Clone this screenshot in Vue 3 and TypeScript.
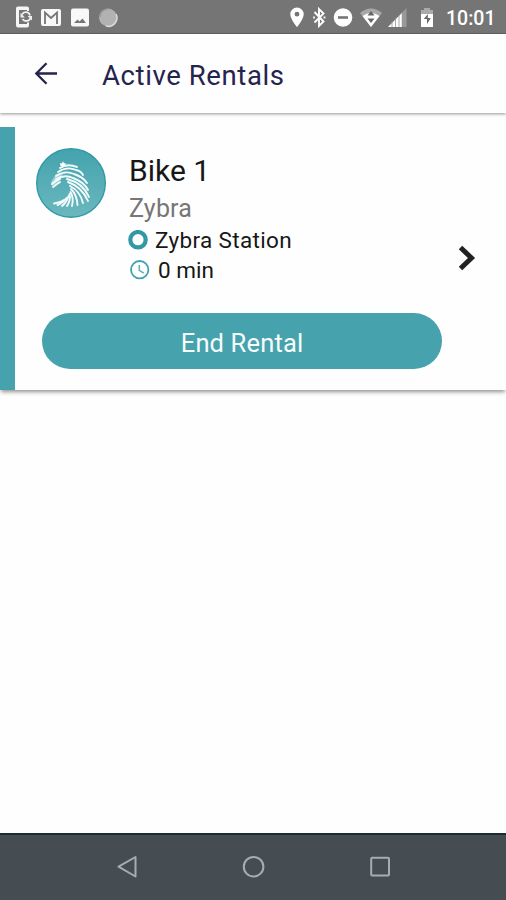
<script setup lang="ts">
import { ref } from 'vue'

interface Rental {
  name: string
  vendor: string
  station: string
  minutes: number
}

const time = '10:01'
const rentals = ref<Rental[]>([
  { name: 'Bike 1', vendor: 'Zybra', station: 'Zybra Station', minutes: 0 },
])

const stripes = [
  'M24 20Q31 15 41 19',
  'M22 24Q31 18 40 22Q45 23 47 27',
  'M20 28Q29 22 38 26Q47 29 51 35',
  'M20 31Q29 26 37 30Q48 34 52 42',
  'M31 31Q47 35 53 49',
  'M32 34Q46 39 52 53',
  'M34 38Q44 43 47 55',
  'M35 41Q41 47 41.500 57',
  'M34.500 44Q38 50 36 58',
  'M33.500 46Q35 52 31 58',
  'M32.500 48Q31 54 26 58',
  'M30.500 50Q27 55 21.500 57',
  'M28 52Q24 55 18 55.500',
  'M16 36Q20 32 24 31',
  'M17 39Q21 36 24 34',
]
</script>

<template>
  <div class="screen">
    <header class="status">
      <div class="group">
        <svg class="phone" width="18" height="34" viewBox="0 0 18 34">
          <path d="M3 6.500h9q2 0 2 2v2.500h-2V10H4v14h8v-1.500h2V25q0 2.500-2 2.500H3q-2 0-2-2.500V8.500q0-2 2-2z" fill="#f5f5f5" />
          <path d="M7 14.500a4.300 4.300 0 0 1 8 1M15.500 18a4.500 4.500 0 0 1-8 1" fill="none" stroke="#eee" stroke-width="1.800" />
          <path d="M5.500 13v4.500H10zM17 20.500v-4.500h-4.500z" fill="#eee" />
        </svg>
        <svg class="mail" width="20" height="34" viewBox="0 0 20 34">
          <rect y="9" width="20" height="17" rx="2" fill="#f8f8f8" />
          <path d="M4 24V12.500l6 5.500 6-5.500V24" fill="none" stroke="#757575" stroke-width="1.800" />
        </svg>
        <svg class="photo" width="18" height="34" viewBox="0 0 18 34">
          <rect y="8.500" width="18" height="18" rx="2" fill="#f8f8f8" />
          <path d="M3 23l3.500-3.500 2 2 3-3L15 23z" fill="#757575" />
        </svg>
        <svg class="orb" width="20" height="34" viewBox="0 0 20 34">
          <circle cx="10" cy="17.500" r="9" fill="#b2b2b2" />
          <path d="M18 14a8.500 8.500 0 0 1-10 12" fill="none" stroke="#ddd" stroke-width="1.500" />
          <path d="M2 17a8 8 0 0 1 8-8" fill="none" stroke="#999" stroke-width="1.500" />
        </svg>
      </div>
      <div class="group">
        <svg width="14" height="34" viewBox="0 0 14 34">
          <path fill-rule="evenodd" d="M7 7.500a6.700 6.700 0 0 1 6.700 6.700C13.700 19 7 27 7 27S.3 19 .3 14.200A6.700 6.700 0 0 1 7 7.500zm0 4.300a2.400 2.400 0 1 0 0 4.800a2.400 2.400 0 0 0 0-4.800z" fill="#fff" />
        </svg>
        <svg class="bt" width="14" height="34" viewBox="0 0 14 34">
          <path d="M1.500 12l9 9.500L6 26V9l4.500 4.500-9 9" fill="none" stroke="#fff" stroke-width="1.900" />
          <path d="M0 16.400h2v2H0zM10.500 16.400h2v2h-2z" fill="#eee" />
        </svg>
        <svg class="dnd" width="20" height="34" viewBox="0 0 20 34">
          <circle cx="10" cy="17.500" r="9.300" fill="#fff" />
          <path d="M5 17.500h10" stroke="#757575" stroke-width="2.600" />
        </svg>
        <svg class="wifi" width="22" height="34" viewBox="0 0 22 34">
          <path d="M0 13Q11 4 22 13L11 27z" fill="#a8a8a8" />
          <path d="M2.500 16Q11 10 19.500 16L11 27z" fill="#fff" />
          <path d="M7.500 15.500L11 11 14.500 15.500zM7.500 18.500h7L11 23z" fill="#666" />
        </svg>
        <svg class="signal" width="19" height="34" viewBox="0 0 19 34">
          <path d="M0 27L18.500 8v19z" fill="#999" />
          <path d="M0 27L14 13v14z" fill="#fff" />
          <path d="M4 21v6M7.500 18v9M11 15v12M14.200 12v15" stroke="#959595" stroke-width=".8" />
        </svg>
        <svg class="battery" width="12" height="34" viewBox="0 0 12 34">
          <path d="M0 10h3V8h6v2h3v8H0z" fill="#aaa" />
          <path d="M0 14h12v13H0z" fill="#fff" />
          <path d="M6.800 14l-4 5H6v5l3.800-6H6.800z" fill="#666" />
        </svg>
        <span class="time">{{ time }}</span>
      </div>
    </header>

    <div class="toolbar">
      <svg class="back" width="24" height="24" viewBox="0 0 24 24">
        <path d="M23 11.500H2.500M12.500 1.300L2.300 11.500 12.500 21.700" fill="none" stroke="#25234f" stroke-width="2.300" />
      </svg>
      <h1>Active Rentals</h1>
    </div>

    <main>
      <article v-for="rental in rentals" :key="rental.name" class="card">
        <div class="details">
          <svg class="logo" width="70" height="70" viewBox="0 0 70 70">
            <defs>
              <linearGradient id="disc" x1="0" y1="0" x2="0" y2="1">
                <stop offset="0" stop-color="#43a3ae" />
                <stop offset="1" stop-color="#6bb8be" />
              </linearGradient>
            </defs>
            <circle cx="35" cy="35" r="34.300" fill="url(#disc)" stroke="#2f9ba5" stroke-width="1.400" />
            <path d="M24.500 18l-.5-3 2 .5 1-2.500 1 2.500 2-.5-1 3z" fill="#fff" />
            <path d="M20 26l-5 8 1 4 4-2 4-4 3-6z" fill="#e5f4f4" opacity=".5" />
            <path v-for="stripe in stripes" :key="stripe" :d="stripe" fill="none" stroke="#f4fbfb" stroke-width="1.900" stroke-linecap="round" />
          </svg>
          <div class="info">
            <h2>{{ rental.name }}</h2>
            <p class="vendor">{{ rental.vendor }}</p>
            <p class="line station">
              <svg width="20" height="20" viewBox="0 0 20 20">
                <circle cx="10" cy="9.700" r="7.700" fill="none" stroke="#3199a6" stroke-width="4.200" />
              </svg>
              <span>{{ rental.station }}</span>
            </p>
            <p class="line duration">
              <svg width="20" height="20" viewBox="0 0 20 20">
                <circle cx="9.700" cy="9.700" r="8.700" fill="none" stroke="#3fa3ae" stroke-width="1.800" />
                <path d="M9.300 5v5.300l4.500 2.800" fill="none" stroke="#60aeb7" stroke-width="1.500" />
              </svg>
              <span>{{ rental.minutes }} min</span>
            </p>
          </div>
          <svg class="chevron" width="18" height="26" viewBox="0 0 18 26">
            <path d="M2.500 2.500L13.500 13 2.500 23.500" fill="none" stroke="#222" stroke-width="5" />
          </svg>
        </div>
        <button type="button" class="end">End Rental</button>
      </article>
    </main>

    <nav class="navigation">
      <svg width="24" height="24" viewBox="0 0 24 24">
        <path d="M21.500 2v19.500L4.500 11.700z" fill="none" stroke="#a6adb0" stroke-width="2" stroke-linejoin="round" />
      </svg>
      <svg width="24" height="24" viewBox="0 0 24 24">
        <circle cx="12.600" cy="11.700" r="9.800" fill="none" stroke="#a6adb0" stroke-width="2" />
      </svg>
      <svg width="24" height="24" viewBox="0 0 24 24">
        <rect x="3.200" y="2.800" width="17.800" height="17.800" rx="1" fill="none" stroke="#a6adb0" stroke-width="2" />
      </svg>
    </nav>
  </div>
</template>

<style>
body {
  margin: 0;
  background: #fefefe;
}
</style>

<style scoped>
.screen {
  display: flex;
  flex-direction: column;
  height: 900px;
  overflow: hidden;
  background: #fefefe;
  font-family: Roboto, sans-serif;
}
svg {
  display: block;
  flex: none;
}
h1, h2, p {
  margin: 0;
  font-weight: 400;
  white-space: nowrap;
}
.status {
  box-sizing: border-box;
  display: flex;
  justify-content: space-between;
  flex: none;
  height: 34px;
  padding: 0 11px 0 15px;
  background: #757575;
  border-bottom: 1px solid #666;
}
.group {
  display: flex;
}
.mail { margin-left: 8px; }
.photo { margin-left: 10px; }
.orb { margin-left: 9px; }
.bt { margin-left: 9px; }
.dnd { margin-left: 6px; }
.wifi { margin-left: 7px; }
.signal { margin-left: 6px; }
.battery { margin-left: 14px; }
.time {
  width: 49px;
  margin-left: 13px;
  color: #fff;
  font-size: 19.500px;
  font-weight: 500;
  line-height: 37px;
}
.toolbar {
  display: flex;
  flex: none;
  align-items: center;
  height: 79px;
  padding-left: 34px;
  background: #fefefe;
  box-shadow: 0 1px 3px rgba(0, 0, 0, 0.42);
}
h1 {
  margin: 4px 0 0 44px;
  color: #25234f;
  font-size: 27.500px;
  letter-spacing: 0.600px;
  line-height: 34px;
}
main {
  flex: 1;
  padding-top: 14px;
}
.card {
  box-sizing: border-box;
  height: 263px;
  padding: 21px 30px 0 21px;
  border-left: 15px solid #46a2ad;
  background: #fefefe;
  box-shadow: 0 3px 4px -1px rgba(0, 0, 0, 0.42);
}
.details {
  display: flex;
  height: 165px;
}
.info {
  flex: 1;
  padding-left: 23px;
}
h2 {
  height: 44px;
  color: #171717;
  font-size: 30px;
  line-height: 45px;
}
.vendor {
  height: 33px;
  color: #777;
  font-size: 25px;
  letter-spacing: 0.200px;
  line-height: 33px;
}
.line {
  display: flex;
  align-items: center;
  height: 30px;
  color: #171717;
  font-size: 22.500px;
  line-height: 30px;
}
.station svg { margin-left: -1px; }
.station span {
  margin-left: 7px;
  letter-spacing: 0.350px;
}
.duration svg { margin-left: 1px; }
.duration span { margin-left: 8px; }
.chevron {
  margin-top: 97px;
}
.end {
  display: block;
  width: 400px;
  height: 56px;
  margin-left: 6px;
  padding: 3px 0 0;
  border: 0;
  border-radius: 28px;
  background: #46a2ad;
  color: #f7fcfc;
  font-family: Roboto, sans-serif;
  font-size: 25.500px;
  letter-spacing: 0.150px;
}
.navigation {
  box-sizing: border-box;
  display: flex;
  justify-content: center;
  gap: 103px;
  flex: none;
  height: 67px;
  padding-top: 20px;
  border-top: 2px solid #1b2d31;
  background: #454d52;
}
</style>
